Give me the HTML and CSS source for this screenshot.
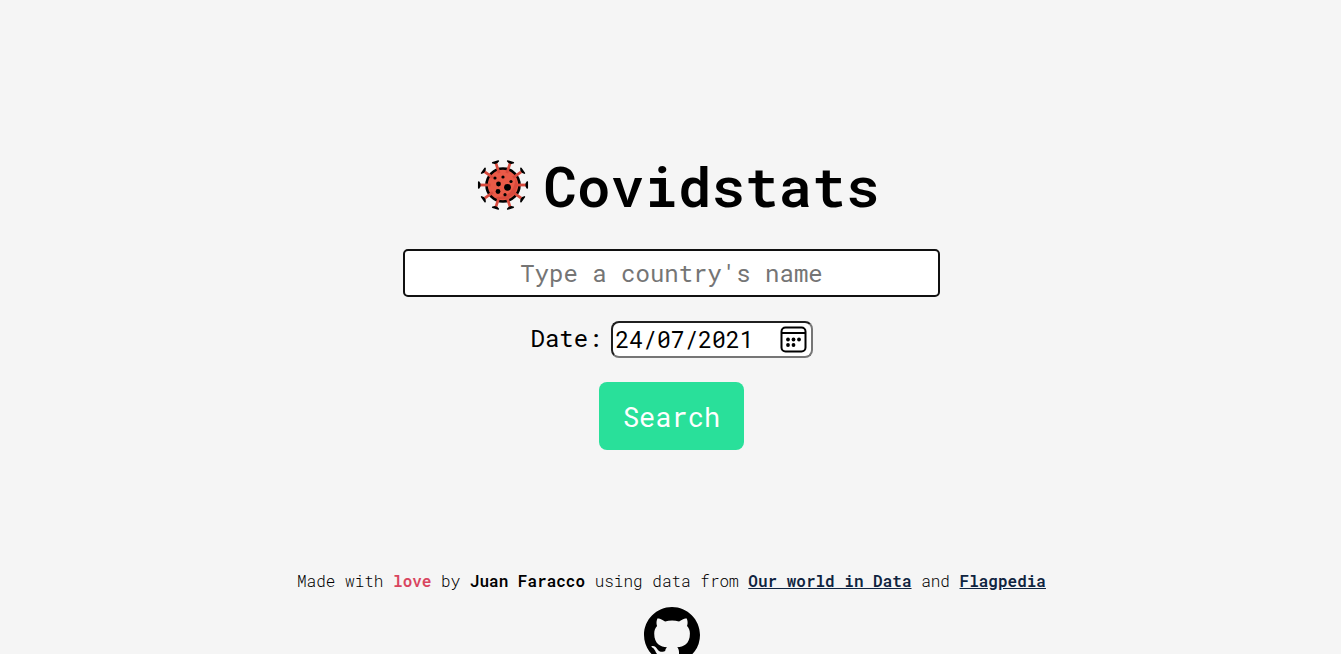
FILE: index.html
```html
<!DOCTYPE html>
<html lang="en">
<head>
<meta charset="utf-8">
<meta name="viewport" content="width=device-width, initial-scale=1">
<title>Covidstats</title>
<link rel="stylesheet" href="styles.css">
</head>
<body>
<main class="home">
  <h1 class="title">
    <svg class="virus" viewBox="-28 -28 56 56" aria-hidden="true">
      <defs>
        <g id="spike">
          <path d="M22.500 0L24.300-3V3z" fill="#000" stroke="#000" stroke-width="1.500" stroke-linejoin="round"/>
          <path d="M12.500 0H22.500" stroke="#d94a3d" stroke-width="2.800"/>
        </g>
      </defs>
      <circle r="16.500" fill="#ea5a47" stroke="#000" stroke-width="2.600"/>
      <path d="M12.500-7A14.500 14.500 0 0 1-8 12C5 13 12 5 12.500-7z" fill="#d94a3d"/>
      <use href="#spike"/>
      <use href="#spike" transform="rotate(36)"/>
      <use href="#spike" transform="rotate(72)"/>
      <use href="#spike" transform="rotate(108)"/>
      <use href="#spike" transform="rotate(144)"/>
      <use href="#spike" transform="rotate(180)"/>
      <use href="#spike" transform="rotate(216)"/>
      <use href="#spike" transform="rotate(252)"/>
      <use href="#spike" transform="rotate(288)"/>
      <use href="#spike" transform="rotate(324)"/>
      <g fill="#000">
        <circle cx="-8" cy="-7" r="1.600"/><circle cx="0" cy="-8" r="1.600"/>
        <circle cx="8" cy="-3.500" r="1.600"/><circle cx="-4.500" cy="-1" r="2.400"/>
        <circle cx="4.500" cy="2.300" r="3.400"/><circle cx="-5" cy="6.500" r="2.400"/>
        <circle cx="2" cy="9.700" r="1.600"/>
      </g>
    </svg>
    Covidstats
  </h1>
  <form class="search">
    <input class="country" type="text" aria-label="Country" placeholder="Type a country's name">
    <div class="date-row">
      <label class="date-label" for="date">Date:</label>
      <div class="date-box">
        <input class="date" id="date" type="text" value="24/07/2021">
        <button class="picker" type="button" aria-label="Open calendar">
          <svg viewBox="0 0 28 28" aria-hidden="true">
            <rect x="1.500" y="1.500" width="24" height="24" rx="4" fill="none" stroke="#000" stroke-width="2"/>
            <path d="M2 7h24" stroke="#000" stroke-width="2"/>
            <g fill="#000"><circle cx="8" cy="13.500" r="1.900"/><circle cx="13.500" cy="13.500" r="1.900"/><circle cx="19" cy="13.500" r="1.900"/><circle cx="8" cy="19" r="1.900"/><circle cx="13.500" cy="19" r="1.900"/></g>
          </svg>
        </button>
      </div>
    </div>
    <button class="submit" type="submit">Search</button>
  </form>
</main>
<footer class="footer">
  <p class="credits">Made with <strong class="love">love</strong> by <strong>Juan Faracco</strong> using data from <a href="#">Our world in Data</a> and <a href="#">Flagpedia</a></p>
  <a class="github" href="#" aria-label="GitHub">
    <svg viewBox="0 0 16 16" aria-hidden="true"><path d="M8 0C3.580 0 0 3.580 0 8c0 3.540 2.290 6.530 5.470 7.590.4.070.55-.17.55-.38 0-.19-.01-.82-.01-1.490-2.010.37-2.530-.49-2.690-.94-.09-.23-.48-.94-.82-1.130-.28-.15-.68-.52-.01-.53.63-.01 1.080.58 1.230.82.72 1.210 1.870.87 2.330.66.07-.52.28-.87.51-1.070-1.780-.2-3.640-.89-3.640-3.950 0-.87.31-1.590.82-2.150-.08-.2-.36-1.020.08-2.120 0 0 .67-.21 2.200.82.64-.18 1.320-.27 2-.27s1.360.09 2 .27c1.530-1.040 2.200-.82 2.200-.82.44 1.100.16 1.920.08 2.120.51.56.82 1.270.82 2.150 0 3.070-1.870 3.750-3.650 3.950.29.25.54.73.54 1.480 0 1.070-.01 1.930-.01 2.200 0 .21.15.46.55.38A8.010 8.010 0 0 0 16 8c0-4.420-3.580-8-8-8z"/></svg>
  </a>
</footer>
</body>
</html>
```
FILE: styles.css
```css
* {
  box-sizing: border-box;
}

body {
  margin: 0;
  padding: 150px 0 0 2px;
  background: #f5f5f5;
  color: #000;
  font-family: "Roboto Mono", "DejaVu Sans Mono", monospace;
}

button,
input {
  font-family: inherit;
}

.home,
.search,
.footer {
  display: flex;
  flex-direction: column;
  align-items: center;
}

.title {
  display: flex;
  align-items: center;
  gap: 12px;
  margin: 0;
  padding-left: 12px;
  font-size: 56px;
  font-weight: 600;
  line-height: 70px;
}

.virus {
  width: 56px;
  height: 56px;
}

.search {
  width: 100%;
  margin-top: 29px;
  gap: 24px;
}

.country {
  width: calc(40% + 1px);
  height: 48px;
  padding: 0 8px;
  border: 2px solid #101010;
  border-radius: 5px;
  background: #fff;
  font-size: 24px;
  text-align: center;
}

.country::placeholder {
  color: #757575;
}

.date-row {
  display: flex;
  align-items: center;
  gap: 8px;
  font-size: 24px;
}

.date-label {
  padding-bottom: 4px;
}

.date-box {
  display: flex;
  align-items: center;
  width: 202px;
  height: 37px;
  padding: 0 3px;
  border: 2px solid;
  border-color: #202020 #767676 #767676 #202020;
  border-radius: 8px;
  background: #fff;
}

.date {
  flex: 1;
  min-width: 0;
  padding: 0 0 2px;
  border: 0;
  background: none;
  font-size: 23px;
}

.picker {
  width: 28px;
  height: 28px;
  padding: 0;
  border: 0;
  background: none;
}

.picker svg,
.github svg {
  display: block;
  width: 100%;
}

.submit {
  height: 68px;
  padding: 0 24px;
  border: 0;
  border-radius: 8px;
  background: #29e09a;
  color: #fff;
  font-size: 27px;
}

.footer {
  margin-top: 119px;
  gap: 14px;
}

.credits {
  margin: 0;
  font-size: 16px;
  font-weight: 300;
  line-height: 24px;
}

.credits strong,
.credits a {
  font-weight: 600;
}

.credits .love {
  color: #d9455f;
}

.credits a {
  color: #0f2440;
}

.github {
  width: 56px;
  color: #000;
}
```
